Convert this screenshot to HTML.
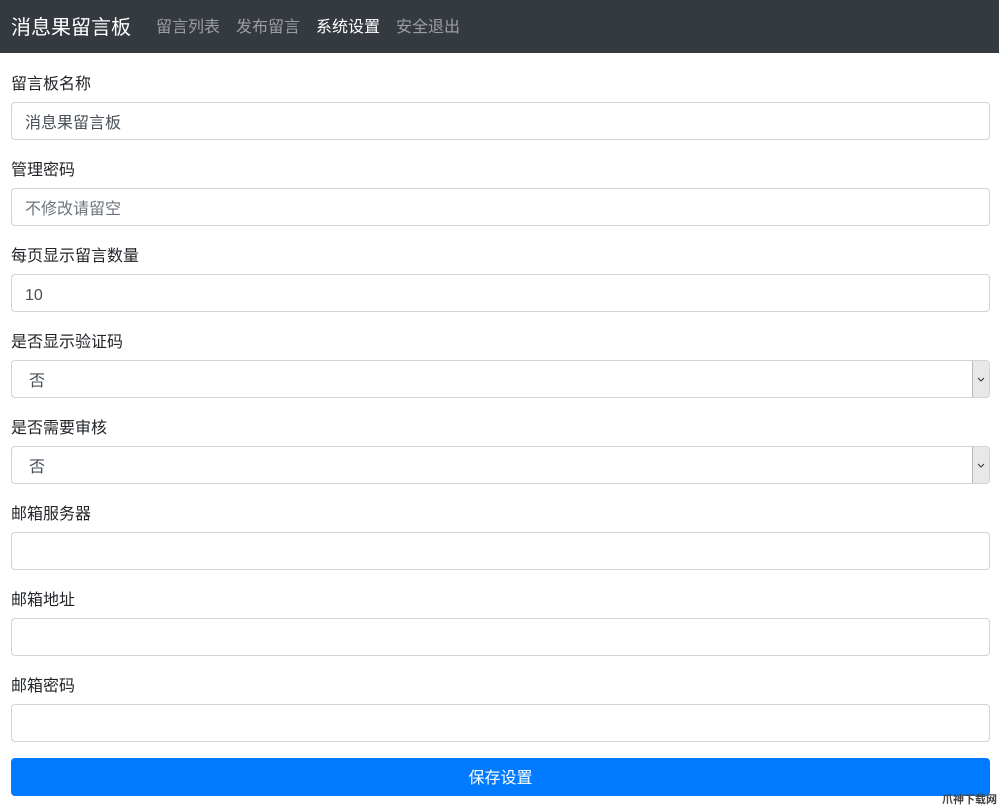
<!DOCTYPE html>
<html><head><meta charset="utf-8"><style>
body{margin:0;width:999px;height:809px;background:#fff;font-family:"Liberation Sans","Noto Sans CJK SC",sans-serif;position:relative;overflow:hidden}
.nav{position:absolute;left:0;top:0;width:999px;height:53px;background:#343a40}
.brand{position:absolute;left:11px;top:14px;font-size:20px;color:#fff;line-height:28px}
.nl{position:absolute;top:17px;font-size:16px;line-height:22px;color:rgba(255,255,255,.5)}
.lab{position:absolute;left:11px;font-size:16px;color:#212529;line-height:22px}
.in{position:absolute;left:11px;width:977px;height:36px;border:1px solid #ced4da;border-radius:4px;font-size:16px;line-height:36px;color:#495057;box-sizing:content-box}
.in span{position:absolute;left:13px;top:3px}
.sel .arr{position:absolute;right:0;top:0;width:16px;height:36px;background:#e8e8e8;border-left:1px solid #bbb;border-radius:0 3px 3px 0}
.btn{position:absolute;left:11px;top:758px;width:979px;height:38px;background:#007bff;border-radius:4px;color:#fff;font-size:16px;text-align:center;line-height:42px}
.wm{position:absolute;right:2px;bottom:2px;font-size:11px;color:#444;font-weight:bold}
</style></head><body>
<div class="nav">
<div class="brand">消息果留言板</div>
<div class="nl" style="left:156px">留言列表</div>
<div class="nl" style="left:236px">发布留言</div>
<div class="nl" style="left:316px;color:#fff">系统设置</div>
<div class="nl" style="left:396px">安全退出</div>
</div>

<div class="lab" style="top:74px">留言板名称</div>
<div class="in" style="top:102px"><span>消息果留言板</span></div>
<div class="lab" style="top:160px">管理密码</div>
<div class="in" style="top:188px"><span style="color:#6c757d">不修改请留空</span></div>
<div class="lab" style="top:246px">每页显示留言数量</div>
<div class="in" style="top:274px"><span>10</span></div>
<div class="lab" style="top:332px">是否显示验证码</div>
<div class="in sel" style="top:360px"><span style="left:17px">否</span><div class="arr"><svg width="16" height="36"><path d="M5 17l3 3 3-3" fill="none" stroke="#333" stroke-width="1"/></svg></div></div>
<div class="lab" style="top:418px">是否需要审核</div>
<div class="in sel" style="top:446px"><span style="left:17px">否</span><div class="arr"><svg width="16" height="36"><path d="M5 17l3 3 3-3" fill="none" stroke="#333" stroke-width="1"/></svg></div></div>
<div class="lab" style="top:504px">邮箱服务器</div>
<div class="in" style="top:532px"></div>
<div class="lab" style="top:590px">邮箱地址</div>
<div class="in" style="top:618px"></div>
<div class="lab" style="top:676px">邮箱密码</div>
<div class="in" style="top:704px"></div>
<div class="btn">保存设置</div>
<div class="wm">爪神下载网</div>
</body></html>
